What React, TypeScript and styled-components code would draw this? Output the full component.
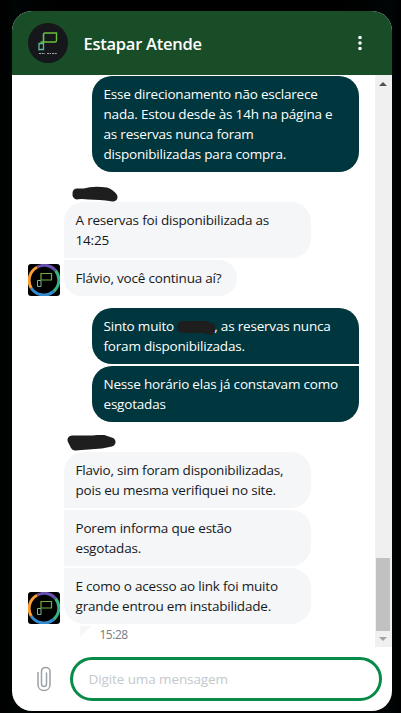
import React from "react";
import styled, { createGlobalStyle, css } from "styled-components";

const GlobalStyle = createGlobalStyle`
  * { box-sizing: border-box; }
  html, body { margin: 0; background: #000; }
  body { font-family: "Open Sans", "Noto Sans", sans-serif; overflow: hidden; }
`;

const Page = styled.div`
  width: 401px;
  height: 713px;
  padding: 11px 9.5px 0 11.5px;
  overflow: hidden;
  background: linear-gradient(90deg, #000 0, #000404 12px, #000 60px, #000 340px, #000505 392px, #000 100%);
`;

const Panel = styled.section`
  display: flex;
  flex-direction: column;
  height: 700px;
  border-radius: 20px;
  overflow: hidden;
  background: #fff;
`;

const Header = styled.header`
  display: flex;
  align-items: center;
  flex: none;
  height: 64px;
  padding: 0 29px 0 16px;
  background: #194d27;
`;

const HeaderLogo = styled.div`
  display: flex;
  width: 40px;
  height: 40px;
  border-radius: 50%;
  overflow: hidden;
  background: #15171a;
`;

const Title = styled.h1`
  flex: 1;
  margin: 0 0 0 16px;
  padding-top: 2px;
  color: #fff;
  font-size: 16.5px;
  font-weight: 600;
  line-height: 24px;
  letter-spacing: -0.25px;
  white-space: nowrap;
`;

const MenuButton = styled.button`
  display: flex;
  padding: 0;
  border: 0;
  background: none;
`;

const Conversation = styled.main`
  display: flex;
  flex: none;
  height: 572px;
`;

const Messages = styled.div`
  flex: 1;
  padding-left: 16px;
`;

const Group = styled.div<{ $mine?: boolean; $top: number }>`
  display: flex;
  align-items: flex-end;
  gap: 4px;
  padding-top: ${(p) => p.$top}px;
  ${(p) => p.$mine && css`padding-left: 64px;`}
`;

const Stack = styled.div`
  display: flex;
  flex-direction: column;
  align-items: flex-start;
  gap: 2px;
`;

const Bubble = styled.div<{ $mine?: boolean; $first?: boolean; $last?: boolean; $fit?: boolean }>`
  width: ${(p) => (p.$fit ? "173px" : p.$mine ? "267px" : "247px")};
  padding: 8px 12px;
  color: ${(p) => (p.$mine ? "#fff" : "#16191c")};
  background: ${(p) => (p.$mine ? "#00363d" : "#f4f6f8")};
  border-radius: ${(p) =>
    p.$mine
      ? `20px ${p.$first ? 20 : 0}px ${p.$last ? 20 : 0}px 20px`
      : `${p.$first ? 20 : 0}px 20px 20px ${p.$last ? 20 : 0}px`};
`;

const Line = styled.div<{ $track?: number }>`
  height: 20px;
  font-size: 13.5px;
  line-height: 20px;
  letter-spacing: ${(p) => p.$track ?? -0.2}px;
  white-space: nowrap;
`;

const BotAvatar = styled.div`
  display: flex;
  flex: none;
  width: 32px;
  height: 32px;
  border-radius: 3px;
  overflow: hidden;
  background: #000;
`;

const SenderName = styled.div<{ $inset: number; $top: number }>`
  display: flex;
  height: 17px;
  margin-top: ${(p) => p.$top}px;
  padding-left: ${(p) => p.$inset}px;
`;

const InlineMark = styled.svg`
  width: 38px;
  height: 16px;
  margin: 0 -1px 0 0;
  vertical-align: -4px;
`;

const TimeRow = styled.div`
  display: flex;
  gap: 9px;
  margin: 2px 0 0 52px;
  color: #777d82;
  font-size: 12px;
  line-height: 18px;
  letter-spacing: -0.5px;
`;

const Scrollbar = styled.div`
  display: flex;
  flex-direction: column;
  align-items: center;
  flex: none;
  width: 17px;
  padding: 7px 1px 6px;
  background: #f0f0f0;
`;

const Thumb = styled.div`
  width: 14px;
  height: 73px;
  margin: auto 0 6px;
  background: #c1c1c1;
`;

const Composer = styled.footer`
  display: flex;
  align-items: flex-start;
  flex: 1;
  padding: 10px 10px 0 24px;
`;

const AttachButton = styled.button`
  display: flex;
  margin: 9px 18px 0 0;
  padding: 0;
  border: 0;
  background: none;
`;

const Field = styled.input`
  flex: 1;
  min-width: 0;
  height: 44px;
  padding: 0 16px 1px;
  border: 3px solid #088b49;
  border-radius: 22px;
  outline: 0;
  font: 13.5px "Open Sans", "Noto Sans", sans-serif;
  letter-spacing: -0.1px;
  &::placeholder { color: #c3c9cd; opacity: 1; }
`;

const BackdropText = styled.div`
  height: 20px;
  margin: -2px 0 0 4px;
  color: #555;
  font-size: 15px;
  line-height: 18px;
`;

function BrandMark() {
  return (
    <svg width="40" height="40" viewBox="0 0 40 40" fill="none">
      <path d="M11 27.5v-7h4.5v-9.5M11.5 26.5h4v-6" stroke="#5fb99b" strokeWidth="1.3" />
      <path d="M15.5 20V11.5q0-1.5 1.5-1.5h11.5v7.500q0 1.500-1.500 1.500H12.500" stroke="#6abf3b" strokeWidth="1.4" />
      <path d="M11 30.500h6M19 30.500h4M24 30.500h5" stroke="#aaa" strokeDasharray="2 .7" />
    </svg>
  );
}

function RingMark() {
  return (
    <svg width="32" height="32" viewBox="0 0 32 32" fill="none">
      <g strokeWidth="3">
        <path d="M9 3.200A15 15 0 0 1 27.500 6.500" stroke="#6550ad" />
        <path d="M27.500 6.500A15 15 0 0 1 25.500 27.500" stroke="#35b583" />
        <path d="M25.500 27.500A15 15 0 0 1 3.200 24" stroke="#328bd0" />
        <path d="M3.200 24A15 15 0 0 1 9 3.200" stroke="#f99d35" />
      </g>
      <path d="M9.500 22.500v-6h3.500v6z" stroke="#76b99a" />
      <path d="M13 16V9.500h10.500v6.500z" stroke="#73ad3d" strokeWidth="1.200" />
    </svg>
  );
}

const Arrow = ({ down = false }: { down?: boolean }) => (
  <svg width="8" height="4" viewBox="0 0 8 4">
    <path d={down ? "M0 0h8L4 4z" : "M0 4h8L4 0z"} fill={down ? "#a3a3a3" : "#505050"} />
  </svg>
);

export default function App() {
  return (
    <Page>
      <GlobalStyle />
      <Panel>
        <Header>
          <HeaderLogo><BrandMark /></HeaderLogo>
          <Title>Estapar Atende</Title>
          <MenuButton aria-label="Menu">
            <svg width="6" height="16" viewBox="0 0 6 16" fill="#fff">
              <circle cx="3" cy="2.500" r="1.800" />
              <circle cx="3" cy="8" r="1.800" />
              <circle cx="3" cy="13.500" r="1.800" />
            </svg>
          </MenuButton>
        </Header>
        <Conversation>
          <Messages>
            <Group $mine $top={1}>
              <Bubble $mine $first $last>
                <Line>Esse direcionamento não esclarece</Line>
                <Line>nada. Estou desde às 14h na página e</Line>
                <Line>as reservas nunca foram</Line>
                <Line>disponibilizadas para compra.</Line>
              </Bubble>
            </Group>
            <SenderName $top={13} $inset={41}>
              <svg width="50" height="17" viewBox="0 0 50 17">
                <path d="M8 8H15Q25 5 37 7Q42 9 44 12Q30 10 20 10Q12 9 8 10" fill="none" stroke="#1e1e1e" strokeWidth="9" strokeLinecap="round" strokeLinejoin="round" />
              </svg>
            </SenderName>
            <Group $top={0}>
              <BotAvatar><RingMark /></BotAvatar>
              <Stack>
                <Bubble $first>
                  <Line>A reservas foi disponibilizada as</Line>
                  <Line>14:25</Line>
                </Bubble>
                <Bubble $last $fit>
                  <Line>Flávio, você continua aí?</Line>
                </Bubble>
              </Stack>
            </Group>
            <Group $mine $top={12}>
              <Stack>
                <Bubble $mine $first>
                  <Line>
                    Sinto muito{" "}
                    <InlineMark viewBox="0 0 38 16">
                      <path d="M6 8H28L33 10" fill="none" stroke="#1e1e1e" strokeWidth="12" strokeLinecap="round" />
                    </InlineMark>
                    , as reservas nunca
                  </Line>
                  <Line>foram disponibilizadas.</Line>
                </Bubble>
                <Bubble $mine $last>
                  <Line>Nesse horário elas já constavam como</Line>
                  <Line>esgotadas</Line>
                </Bubble>
              </Stack>
            </Group>
            <SenderName $top={13} $inset={38}>
              <svg width="52" height="17" viewBox="0 0 52 17">
                <path d="M6 5L15 5L27 5L36 4L45 7L35 9L22 10L9 11Z" fill="#1e1e1e" stroke="#1e1e1e" strokeWidth="9" strokeLinejoin="round" />
              </svg>
            </SenderName>
            <Group $top={0}>
              <BotAvatar><RingMark /></BotAvatar>
              <Stack>
                <Bubble $first>
                  <Line>Flavio, sim foram disponibilizadas,</Line>
                  <Line>pois eu mesma verifiquei no site.</Line>
                </Bubble>
                <Bubble>
                  <Line>Porem informa que estão</Line>
                  <Line>esgotadas.</Line>
                </Bubble>
                <Bubble $last>
                  <Line>E como o acesso ao link foi muito</Line>
                  <Line>grande entrou em instabilidade.</Line>
                </Bubble>
              </Stack>
            </Group>
            <TimeRow>
              <svg width="11" height="12" viewBox="0 0 11 12"><path d="M0 0h11L0 11z" fill="#f4f6f8" /></svg>
              15:28
            </TimeRow>
          </Messages>
          <Scrollbar>
            <Arrow />
            <Thumb />
            <Arrow down />
          </Scrollbar>
        </Conversation>
        <Composer>
          <AttachButton aria-label="Anexar">
            <svg width="16" height="26" viewBox="0 0 16 26" fill="none" stroke="#9aa1a8" strokeWidth="1.500" strokeLinecap="round">
              <path d="M2 6.500V18.500C2 26.500 14 26.500 14 18.500V5.500C14 .200 5.500 .200 5.500 5.500V17.500C5.500 21.500 10.500 21.500 10.500 17.500V7" />
            </svg>
          </AttachButton>
          <Field placeholder="Digite uma mensagem" />
        </Composer>
      </Panel>
      <BackdropText>Ativar o Windows</BackdropText>
    </Page>
  );
}
